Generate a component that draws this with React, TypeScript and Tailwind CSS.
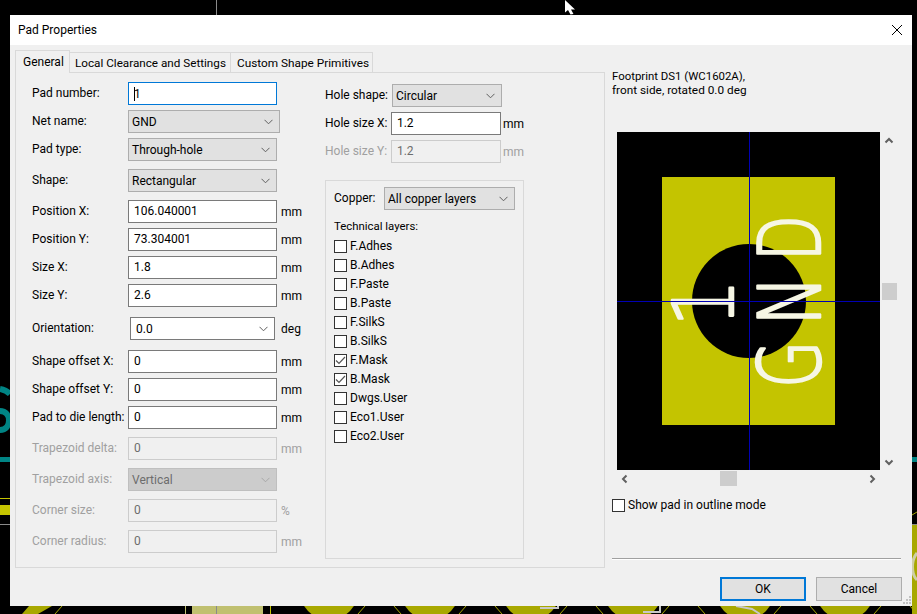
import { ReactNode } from "react";

const inputBox = "h-[23px] border flex items-center shrink-0";

function Chevron({ className = "stroke-[#606060]" }: { className?: string }) {
  return (
    <svg width="9" height="6" viewBox="0 0 9 6" className={`shrink-0 ${className}`} fill="none" strokeWidth="1">
      <path d="M0.5 0.8 L4.5 4.8 L8.5 0.8" />
    </svg>
  );
}

function ScrollArrow({ dir }: { dir: "up" | "down" | "left" | "right" }) {
  const d = {
    up: "M1.5 6.5 L5 3 L8.5 6.5",
    down: "M1.5 3.5 L5 7 L8.5 3.5",
    left: "M6.5 1.5 L3 5 L6.5 8.5",
    right: "M3.5 1.5 L7 5 L3.5 8.5",
  }[dir];
  return (
    <svg width="10" height="10" viewBox="0 0 10 10" fill="none" stroke="#606060" strokeWidth="2" className="shrink-0">
      <path d={d} />
    </svg>
  );
}

function Select({ value, width, disabled }: { value: string; width: string; disabled?: boolean }) {
  return (
    <div
      className={`${inputBox} ${width} pl-[3px] pr-[6px] justify-between ${
        disabled ? "bg-[#cccccc] border-[#bfbfbf] text-[#6d6d6d]" : "bg-[#e1e1e1] border-[#adadad]"
      }`}
    >
      <span>{value}</span>
      <Chevron className={disabled ? "stroke-[#a8a8a8]" : "stroke-[#606060]"} />
    </div>
  );
}

function Input({ value, width = "w-[149px]", disabled }: { value: string; width?: string; disabled?: boolean }) {
  return (
    <div
      className={`${inputBox} ${width} pl-[5px] pb-[2px] ${
        disabled ? "bg-[#f0f0f0] border-[#cccccc] text-[#6d6d6d]" : "bg-white border-[#7a7a7a]"
      }`}
    >
      {value}
    </div>
  );
}

function Row({ label, unit, disabled, className = "mt-[5px]", children }: {
  label: string;
  unit?: string;
  disabled?: boolean;
  className?: string;
  children: ReactNode;
}) {
  return (
    <div className={`flex items-center h-[23px] ${className} ${disabled ? "text-[#a0a0a0]" : ""}`}>
      <span className="w-[96px] shrink-0 pb-[2px]">{label}</span>
      {children}
      {unit && <span className="ml-[4px]">{unit}</span>}
    </div>
  );
}

function Check({ label, checked }: { label: string; checked?: boolean }) {
  return (
    <div className="flex items-start h-[19px] leading-[13px]">
      <div className="w-[13px] h-[13px] border border-[#333333] bg-white shrink-0 flex items-center justify-center">
        {checked && (
          <svg width="11" height="11" viewBox="0 0 11 11" fill="none" stroke="#555555" strokeWidth="1.2">
            <path d="M1 5.5 L4 8.5 L10 2" />
          </svg>
        )}
      </div>
      <span className="ml-[3px]">{label}</span>
    </div>
  );
}

const layers = [
  ["F.Adhes"], ["B.Adhes"], ["F.Paste"], ["B.Paste"], ["F.SilkS"], ["B.SilkS"],
  ["F.Mask", true], ["B.Mask", true], ["Dwgs.User"], ["Eco1.User"], ["Eco2.User"],
] as const;

// whatever of the board shows around the dialog
function BoardBehind() {
  const pads = [329, 430, 531, 633, 745, 845];
  return (
    <svg className="absolute inset-0" width="917" height="614" viewBox="0 0 917 614" fill="none">
      <line x1="216.5" y1="0" x2="216.5" y2="15" stroke="#8a8a8a" />
      <path d="M0 389 Q6 390 10 394" stroke="#008484" strokeWidth="6" />
      <path d="M0 411 C12 411 12 430 0 430" stroke="#008484" strokeWidth="6" />
      <rect x="0" y="457" width="10" height="5" fill="#008484" />
      <rect x="0" y="498" width="10" height="1" fill="#c4c400" />
      <rect x="0" y="505" width="10" height="10" fill="#c4c400" />
      <rect x="0" y="524" width="10" height="1" fill="#8a8a8a" />
      <rect x="912" y="457" width="5" height="5" fill="#008484" />
      <path d="M912 515 L917 512" stroke="#a8a800" />
      <rect x="912" y="524" width="5" height="90" fill="#a8a800" />
      <rect x="912" y="524" width="5" height="1" fill="#8a8a8a" />
      <path d="M917 553 C911 560 911 574 917 580" stroke="#cfcfa8" strokeWidth="3" />
      <path d="M29 606 L52 606 L38 614 L22 614 Z" fill="#a8a800" />
      <path d="M62 606 L55 614" stroke="#a8a800" />
      {pads.map((x) => (
        <g key={x}>
          <circle cx={x} cy="590" r="29.7" fill="#a8a800" />
          <path d={`M${x + 36} 606 L${x + 29} 614 M${x + 65} 606 L${x + 72} 614`} stroke="#a8a800" />
        </g>
      ))}
      <rect x="192" y="606" width="71" height="8" fill="#c0c070" />
      <rect x="185" y="606" width="1" height="8" fill="#c0c070" />
      <rect x="216" y="606" width="1" height="8" fill="#8a8a8a" />
      <rect x="270" y="606" width="1" height="8" fill="#c4c400" />
      <path d="M540 608 H558 V606 M643 612 H660 V606 M736 606 L752 609 L760 614" stroke="#c8c8c8" strokeWidth="2" />
      <path d="M565 0 L575 9.5 L571 9.5 L573.5 14 L570.5 14.5 L568 10 L565 12.5 Z" fill="white" />
    </svg>
  );
}

function PadCanvas() {
  const silk = "#f6f6e4";
  return (
    <svg width="263" height="338" viewBox="617 132 263 338" className="block">
      <rect x="617" y="132" width="263" height="338" fill="black" />
      <rect x="662" y="177" width="173" height="248" fill="#c4c400" />
      <circle cx="749" cy="301" r="57" fill="black" />
      <g fontFamily="'DejaVu Sans', sans-serif" fontWeight="200" fill={silk} stroke={silk} strokeWidth="2.5" strokeLinejoin="round" fontSize="85">
        <text transform="translate(820 388) rotate(-90) scale(0.72 1)">G</text>
        <text transform="translate(820 326) rotate(-90) scale(0.8 1)">N</text>
        <text transform="translate(820 261) rotate(-90) scale(0.7 1)">D</text>
        <text transform="translate(733 327) rotate(-90) scale(0.9 1)" fontSize="84">1</text>
      </g>
      <line x1="617" y1="301.5" x2="880" y2="301.5" stroke="#0000b4" />
      <line x1="749.5" y1="132" x2="749.5" y2="470" stroke="#0000b4" />
    </svg>
  );
}

export default function App() {
  return (
    <div className="relative w-[917px] h-[614px] bg-black overflow-hidden font-['Roboto',sans-serif] text-[12px] leading-[14px] text-black">
      <BoardBehind />

      <div className="absolute left-[10px] top-[15px] w-[902px] h-[591px] flex flex-col bg-[#f0f0f0]">
        <div className="h-[30px] bg-white flex items-center justify-between pl-[8px] pr-[10px] shrink-0">
          <span>Pad Properties</span>
          <svg width="10" height="10" viewBox="0 0 10 10" stroke="black" strokeWidth="1">
            <path d="M0 0 L10 10 M10 0 L0 10" />
          </svg>
        </div>

        <div className="flex flex-1 pl-[5px] pt-[5px]">
          {/* Notebook */}
          <div className="w-[590px] shrink-0">
            <div className="flex items-end h-[22px]">
              <div className="h-[23px] w-[55px] pl-[7px] pt-[4px] border border-b-0 border-[#d9d9d9] bg-[#f0f0f0] relative top-[1px] z-10">General</div>
              <div className="h-[20px] w-[161px] pl-[5px] pt-[3px] border border-l-0 border-b-0 border-[#d9d9d9] bg-[#f0f0f0] text-[11.7px]">Local Clearance and Settings</div>
              <div className="h-[20px] w-[142px] pl-[6px] pt-[3px] border border-l-0 border-b-0 border-[#d9d9d9] bg-[#f0f0f0] text-[11.8px]">Custom Shape Primitives</div>
            </div>

            <div className="h-[496px] border border-[#d9d9d9] flex pl-[16px] pt-[9px]">
              {/* Left column */}
              <div className="w-[293px] shrink-0">
                <Row label="Pad number:" className="">
                  <div className={`${inputBox} w-[149px] pl-[5px] bg-white border-[#0078d7]`}>
                    <span className="bg-black w-[1px] h-[14px] -mr-[1px]" />
                    <span>1</span>
                  </div>
                </Row>
                <Row label="Net name:">
                  <Select value="GND" width="w-[152px]" />
                </Row>
                <Row label="Pad type:">
                  <Select value="Through-hole" width="w-[149px]" />
                </Row>
                <Row label="Shape:" className="mt-[8px]">
                  <Select value="Rectangular" width="w-[149px]" />
                </Row>
                <Row label="Position X:" unit="mm" className="mt-[8px]">
                  <Input value="106.040001" />
                </Row>
                <Row label="Position Y:" unit="mm">
                  <Input value="73.304001" />
                </Row>
                <Row label="Size X:" unit="mm">
                  <Input value="1.8" />
                </Row>
                <Row label="Size Y:" unit="mm">
                  <Input value="2.6" />
                </Row>
                <Row label="Orientation:" className="mt-[10px]">
                  <div className={`${inputBox} w-[145px] ml-[2px] pl-[5px] pr-[6px] justify-between bg-white border-[#7a7a7a]`}>
                    <span>0.0</span>
                    <Chevron />
                  </div>
                  <span className="ml-[6px]">deg</span>
                </Row>
                <Row label="Shape offset X:" unit="mm" className="mt-[10px]">
                  <Input value="0" />
                </Row>
                <Row label="Shape offset Y:" unit="mm">
                  <Input value="0" />
                </Row>
                <Row label="Pad to die length:" unit="mm">
                  <Input value="0" />
                </Row>
                <Row label="Trapezoid delta:" unit="mm" disabled className="mt-[8px]">
                  <Input value="0" disabled />
                </Row>
                <Row label="Trapezoid axis:" disabled className="mt-[8px]">
                  <Select value="Vertical" width="w-[149px]" disabled />
                </Row>
                <Row label="Corner size:" unit="%" disabled className="mt-[8px]">
                  <Input value="0" disabled />
                </Row>
                <Row label="Corner radius:" unit="mm" disabled className="mt-[8px]">
                  <Input value="0" disabled />
                </Row>
              </div>

              {/* Right column */}
              <div className="w-[199px] shrink-0 pt-[2px]">
                <div className="flex items-center h-[23px]">
                  <span className="w-[67px] pb-[2px]">Hole shape:</span>
                  <Select value="Circular" width="w-[110px]" />
                </div>
                <div className="flex items-center h-[23px] mt-[5px]">
                  <span className="w-[67px] pb-[2px]">Hole size X:</span>
                  <Input value="1.2" width="w-[110px]" />
                  <span className="ml-[2px]">mm</span>
                </div>
                <div className="flex items-center h-[23px] mt-[5px] text-[#a0a0a0]">
                  <span className="w-[67px] pb-[2px]">Hole size Y:</span>
                  <Input value="1.2" width="w-[110px]" disabled />
                  <span className="ml-[2px]">mm</span>
                </div>

                <div className="h-[379px] mt-[17px] border border-[#d9d9d9] pl-[8px] pt-[6px]">
                  <div className="flex items-center h-[23px]">
                    <span className="w-[50px] pb-[2px]">Copper:</span>
                    <Select value="All copper layers" width="w-[131px]" />
                  </div>
                  <div className="mt-[9px] mb-[7px] text-[11.4px]">Technical layers:</div>
                  {layers.map(([name, checked]) => (
                    <Check key={name} label={name} checked={checked} />
                  ))}
                </div>
              </div>
            </div>
          </div>

          {/* Preview side */}
          <div className="ml-[7px] w-[289px] pt-[19px] flex flex-col">
            <div className="text-[11.4px]">Footprint DS1 (WC1602A),</div>
            <div className="text-[11.8px]">front side, rotated 0.0 deg</div>

            <div className="flex ml-[5px] mt-[35px]">
              <PadCanvas />
              <div className="w-[16px] ml-[1px] flex flex-col items-center">
                <div className="h-[16px] mt-[1px] flex items-center"><ScrollArrow dir="up" /></div>
                <div className="w-[15px] h-[17px] mt-[134px] bg-[#cdcdcd]" />
                <div className="h-[16px] mt-[154px] flex items-center"><ScrollArrow dir="down" /></div>
              </div>
            </div>

            <div className="flex items-center w-[263px] h-[15px] ml-[5px] mt-[1px]">
              <div className="w-[16px] flex justify-center"><ScrollArrow dir="left" /></div>
              <div className="w-[17px] h-[15px] ml-[87px] bg-[#cdcdcd]" />
              <div className="w-[16px] ml-auto flex justify-center"><ScrollArrow dir="right" /></div>
            </div>

            <div className="mt-[13px]">
              <Check label="Show pad in outline mode" />
            </div>

            <div className="mt-[40px] h-[2px] border-t border-[#a0a0a0] bg-white" />

            <div className="flex justify-end gap-[10px] mt-[17px] -mr-[1px]">
              <div className="w-[86px] h-[24px] bg-[#e1e1e1] border-2 border-[#0078d7] flex items-center justify-center">OK</div>
              <div className="w-[86px] h-[24px] bg-[#e1e1e1] border border-[#adadad] flex items-center justify-center">Cancel</div>
            </div>
          </div>
        </div>

        {/* Resize grip */}
        <svg className="absolute right-[1px] bottom-[1px]" width="9" height="9" viewBox="0 0 9 9" fill="#c0c0c0">
          <path d="M7 0h2v2H7z M4 3h2v2H4z M7 3h2v2H7z M1 6h2v2H1z M4 6h2v2H4z M7 6h2v2H7z" />
        </svg>
      </div>
    </div>
  );
}
